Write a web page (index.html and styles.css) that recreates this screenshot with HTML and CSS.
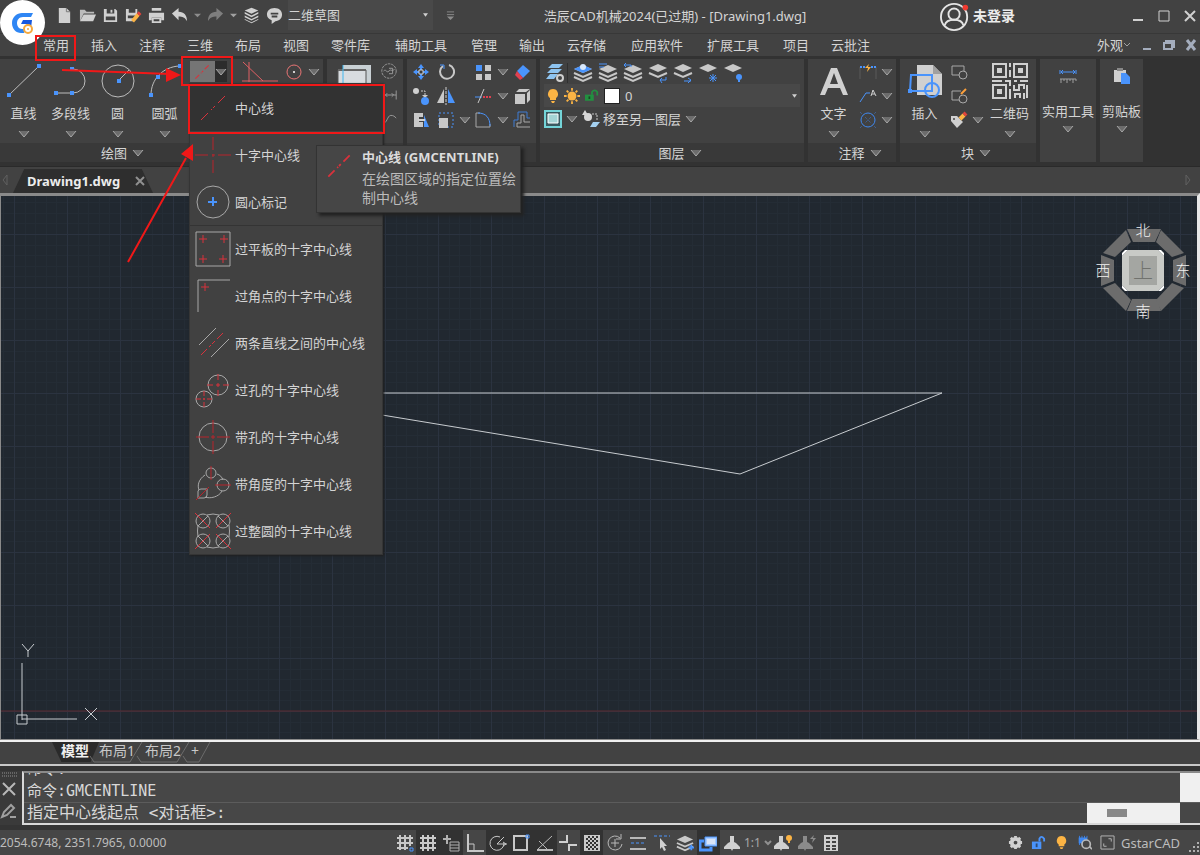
FILE: index.html
```html
<!DOCTYPE html>
<html lang="zh-CN">
  <head>
    <meta charset="utf-8">
    <title>浩辰CAD机械2024(已过期) - [Drawing1.dwg]</title>
    <link rel="stylesheet" href="styles.css">
  </head>
  <body>
    <svg class="defs" aria-hidden="true">
      <symbol id="caret" viewBox="0 0 12 8"><path d="M1 1h10L6 7z" fill="#6c6c6c"/><path d="M1 1l5 6 5-6" fill="none" stroke="#a8a8a8"/></symbol>
      <symbol id="stack" viewBox="0 0 20 20"><path d="M10 2l9 4-9 4-9-4z" fill="#c8c8c8"/><path d="M1 10l9 4 9-4M1 14l9 4 9-4" fill="none" stroke="#c8c8c8" stroke-width="2"/></symbol>
      <symbol id="centerline" viewBox="0 0 36 36"><path d="M6 30l7-7m3-3l1-1m1-1l2-2m3-3l7-7" fill="none" stroke="#d8323c"/></symbol>
      <symbol id="bulb" viewBox="0 0 12 16"><path d="M6 1a5 5 0 0 1 3 9v2H3v-2a5 5 0 0 1 3-9zM4 13h4l-1 2H5z" fill="#fcb444"/></symbol>
      <symbol id="lamp" viewBox="0 0 18 18"><path d="M7 2h4v6l2 1 4 4v2h-7l-1 2-1-2H1v-2l4-4 2-1z" fill="#d0d0d0"/></symbol>
    </svg>

    <header class="titlebar">
      <button class="logo" aria-label="浩辰CAD">
        <svg viewBox="0 0 45 45" width="45" height="45">
          <path d="M33 13H22c-5 0-10 4-10 10s4 10 9 10h3l2-4h-4c-3 0-5-3-5-6s2-6 6-6h8z" fill="#2f86f4"/>
          <path d="M32 20h-9l-2 4h6l-2 7 6-3z" fill="#1558e0"/>
          <circle cx="28" cy="29" r="4" fill="#fff" stroke="#f5a83c" stroke-width="2"/><circle cx="28" cy="29" r="1" fill="#f5a83c"/>
        </svg>
      </button>
      <div class="quick">
        <button aria-label="新建"><svg viewBox="0 0 18 18"><path d="M3 1h8l4 4v12H3z" fill="#d0d0d0"/><path d="M11 1v4h4" fill="none" stroke="#777"/></svg></button>
        <button aria-label="打开"><svg viewBox="0 0 18 18"><path d="M1 15V3h5l2 2h8v2H5z" fill="#bbb"/><path d="M5 8h13l-3 7H1z" fill="#d0d0d0"/></svg></button>
        <button aria-label="保存"><svg viewBox="0 0 18 18"><path d="M2 2h12l2 2v12H2z" fill="#d0d0d0"/><path d="M5 2h8v5H5zM4 10h10v4H4z" fill="#424242"/><path d="M9 3h2v3H9z" fill="#d0d0d0"/></svg></button>
        <button aria-label="另存为"><svg viewBox="0 0 18 18"><path d="M1 2h12v10l-4 3H1z" fill="#d0d0d0"/><path d="M4 2h7v4H4zM3 9h8v3H3z" fill="#424242"/><path d="M8 15l6-7" stroke="#fcb444" stroke-width="4"/><path d="M14 8l2-2" stroke="#e0443c" stroke-width="4"/></svg></button>
        <button aria-label="打印"><svg viewBox="0 0 18 18"><path d="M4 1h10v3H4zM1 6h16v8h-3v-3H4v3H1z" fill="#d0d0d0"/><path d="M5 12h8v4H5z" fill="none" stroke="#d0d0d0" stroke-width="2"/></svg></button>
        <button aria-label="撤销"><svg viewBox="0 0 18 18"><path d="M1 7l7-6v4c6 0 9 4 9 10-2-4-5-5-9-5v4z" fill="#d0d0d0"/></svg></button>
        <button class="thin" aria-label="撤销列表"><svg viewBox="0 0 8 8"><path d="M0 2h8L4 6z" fill="#8c8c8c"/></svg></button>
        <button aria-label="重做"><svg viewBox="0 0 18 18"><path d="M17 7l-7-6v4c-6 0-9 4-9 10 2-4 5-5 9-5v4z" fill="#7e7e7e"/></svg></button>
        <button class="thin" aria-label="重做列表"><svg viewBox="0 0 8 8"><path d="M0 2h8L4 6z" fill="#a0a0a0"/></svg></button>
        <button aria-label="图层"><svg viewBox="0 0 18 20"><path d="M9 1l8 3-8 4-8-4zM1 6l8 4 8-4v2l-8 4-8-4zM1 10l8 4 8-4v2l-8 4-8-4zM1 14l8 4 8-4v1l-8 4-8-4z" fill="#d0d0d0"/></svg></button>
        <button aria-label="消息"><svg viewBox="0 0 18 18"><path d="M9 1c5 0 8 3 8 7s-3 7-7 7l-4 3v-4c-3-1-5-3-5-6 0-4 3-7 8-7z" fill="#d0d0d0"/><path d="M5 7h8M6 10h6" stroke="#424242" stroke-width="2"/></svg></button>
      </div>
      <button class="workspace">二维草图<svg viewBox="0 0 6 4" width="5" height="4"><path d="M0 0h6L3 4z" fill="#d0d0d0"/></svg></button>
      <button class="more" aria-label="自定义"><svg viewBox="0 0 10 10" width="9" height="9"><path d="M1 1h8M1 4h8" stroke="#8c8c8c"/><path d="M1 6h8L5 10z" fill="#8c8c8c"/></svg></button>
      <div class="caption">浩辰CAD机械2024(已过期) - [Drawing1.dwg]</div>
      <div class="account">
        <button class="login">
          <svg viewBox="0 0 32 32" width="30" height="30" fill="none" stroke="#e4e4e4" stroke-width="2"><circle cx="15" cy="17" r="14"/><circle cx="15" cy="14" r="6"/><path d="M5 26c2-8 18-8 20 0"/><circle cx="27" cy="7" r="3" fill="#f03a30" stroke="none"/></svg>
          未登录
        </button>
        <div class="window-buttons">
          <button aria-label="最小化"><svg viewBox="0 0 12 12"><path d="M1 10h10" stroke="#d0d0d0" stroke-width="2"/></svg></button>
          <button aria-label="最大化"><svg viewBox="0 0 12 12"><path d="M1 1h10v10H1z" fill="none" stroke="#d0d0d0"/></svg></button>
          <button aria-label="关闭"><svg viewBox="0 0 12 12"><path d="M1 1l10 10M11 1L1 11" stroke="#d0d0d0" stroke-width="2"/></svg></button>
        </div>
      </div>
    </header>

    <nav class="menubar">
      <a class="active" href="#home">常用</a><a href="#insert">插入</a><a href="#annotate">注释</a><a href="#three">三维</a><a href="#layout">布局</a><a href="#view">视图</a><a class="w3" href="#parts">零件库</a><a class="w4" href="#assist">辅助工具</a><a href="#manage">管理</a><a href="#output">输出</a><a class="w3" href="#cloud">云存储</a><a class="w4" href="#apps">应用软件</a><a class="w4" href="#express">扩展工具</a><a href="#project">项目</a><a class="w3" href="#markup">云批注</a>
      <div class="doc-buttons">
        <button>外观<svg viewBox="0 0 8 6" width="8" height="6"><path d="M1 1l3 3 3-3" fill="none" stroke="#a0a0a0"/></svg></button>
        <button aria-label="最小化图形"><svg viewBox="0 0 12 12" width="12" height="12"><path d="M2 10h8" stroke="#a4adbd" stroke-width="2"/></svg></button>
        <button aria-label="还原图形"><svg viewBox="0 0 12 12" width="12" height="12"><path d="M3 4V2h8v6H9M1 4h8v6H1z" fill="none" stroke="#a4adbd" stroke-width="2"/></svg></button>
        <button aria-label="关闭图形"><svg viewBox="0 0 12 12" width="12" height="12"><path d="M2 1l8 10M10 1L2 11" stroke="#a4adbd" stroke-width="3"/></svg></button>
      </div>
    </nav>

    <section class="ribbon">
      <div class="panel draw">
        <div class="body">
          <button class="big"><svg viewBox="0 0 36 36"><path d="M3 32L33 3" stroke="#bdbdbd"/><path d="M1 30h4v4H1zM31 1h4v4h-4z" fill="#4a94fc"/></svg>直线<svg class="caret"><use href="#caret"/></svg></button>
          <button class="big"><svg viewBox="0 0 36 36"><path d="M3 30h17a12 12 0 0 0 0-24h-1" fill="none" stroke="#bdbdbd"/><path d="M1 28h4v4H1zM17 28h4v4h-4zM17 4h4v4h-4z" fill="#4a94fc"/></svg>多段线<svg class="caret"><use href="#caret"/></svg></button>
          <button class="big"><svg viewBox="0 0 36 36"><circle cx="18" cy="18" r="16" fill="none" stroke="#bdbdbd"/><path d="M18 18L29 7" stroke="#bdbdbd"/><path d="M17 16h4v4h-4z" fill="#4a94fc"/></svg>圆<svg class="caret"><use href="#caret"/></svg></button>
          <button class="big"><svg viewBox="0 0 36 36"><path d="M4 32C4 16 16 4 32 3" fill="none" stroke="#bdbdbd"/><path d="M2 30h4v4H2zM9 12h4v4H9zM31 1h4v4h-4z" fill="#4a94fc"/></svg>圆弧<svg class="caret"><use href="#caret"/></svg></button>
          <div class="split">
            <button class="main" aria-label="中心线"><svg viewBox="0 0 36 36" width="22" height="20"><use href="#centerline"/></svg></button>
            <button class="drop" aria-label="展开中心线"><svg class="caret"><use href="#caret"/></svg></button>
            <ul class="menu">
              <li class="current"><button><svg viewBox="0 0 36 36"><use href="#centerline"/></svg>中心线</button></li>
              <li><button><svg viewBox="0 0 36 36" stroke="#b8242c"><path d="M0 18h13m4 0h3m3 0h13M18 0v13m0 4v3m0 3v13"/></svg>十字中心线</button></li>
              <li><button><svg viewBox="0 0 36 36" fill="none"><circle cx="18" cy="18" r="16" stroke="#a8a8a8"/><path d="M13 18h9M18 13v9" stroke="#4a94fc" stroke-width="2"/></svg>圆心标记</button></li>
              <li class="rule"><button><svg viewBox="0 0 36 36" fill="none"><path d="M1 1h34v34H1z" stroke="#a8a8a8"/><path d="M4 8h8M8 4v8M25 8h8M29 4v8M4 28h8M8 24v8M24 28h8M28 24v8" stroke="#d8323c"/></svg>过平板的十字中心线</button></li>
              <li><button><svg viewBox="0 0 36 36" fill="none"><path d="M3 34V2h32" stroke="#a8a8a8"/><path d="M6 9h8M10 5v8" stroke="#d8323c"/></svg>过角点的十字中心线</button></li>
              <li><button><svg viewBox="0 0 36 36" fill="none"><path d="M4 20L21 3M16 32l18-18" stroke="#a8a8a8"/><path d="M6 30l6-6m2-2l2-2m1-1l3-3m2-2l6-6" stroke="#d8323c"/></svg>两条直线之间的中心线</button></li>
              <li><button><svg viewBox="0 0 36 36" fill="none"><circle cx="23" cy="13" r="10" stroke="#a8a8a8"/><circle cx="9" cy="27" r="8" stroke="#a8a8a8"/><path d="M12 13h6m3 0h4m3 0h6M23 2v6m0 3v4m0 3v6M1 27h5m2 0h2m2 0h5M9 19v5m0 2v2m0 2v5" stroke="#d8323c"/></svg>过孔的十字中心线</button></li>
              <li><button><svg viewBox="0 0 36 36" fill="none"><circle cx="18" cy="18" r="14" stroke="#a8a8a8"/><path d="M1 18h13m2 0h4m2 0h13M18 1v13m0 2v4m0 2v13" stroke="#b8242c"/></svg>带孔的十字中心线</button></li>
              <li><button><svg viewBox="0 0 36 36" fill="none" stroke="#a8a8a8"><path d="M10 9c-6 4-8 10-6 15M22 8c3 1 5 3 6 6M27 25c-3 6-12 8-17 6"/><circle cx="16" cy="7" r="5"/><circle cx="28" cy="19" r="6"/><path d="M3 32v-7q1-2 3-2h6v6q0 3-3 3z"/><path d="M16 0v14M20 19h16M1 34l13-13" stroke="#b8242c"/></svg>带角度的十字中心线</button></li>
              <li><button><svg viewBox="0 0 36 36" fill="none" stroke="#a8a8a8"><circle cx="8" cy="8" r="7"/><circle cx="28" cy="8" r="7"/><circle cx="8" cy="28" r="7"/><circle cx="28" cy="28" r="7"/><path d="M12 2q6-2 12 0M12 34q6 2 12 0M3 12q-1 6 0 12M34 12q1 6 0 12M3 13L13 3M23 3l10 10M3 23l10 10M23 33l10-10"/><path d="M0 0l15 15M36 0L21 15M0 36l15-15M36 36L21 21" stroke="#d8323c"/></svg>过整圆的十字中心线</button></li>
            </ul>
            <div class="tooltip" role="tooltip">
              <svg viewBox="0 0 36 36" width="32" height="32"><use href="#centerline"/></svg>
              <div><strong>中心线 (GMCENTLINE)</strong><p>在绘图区域的指定位置绘制中心线</p></div>
            </div>
          </div>
          <button class="small wide" aria-label="角度中心线"><svg viewBox="0 0 38 22" width="38" height="22"><path d="M2 1l20 19M8 1v20M1 20h36" fill="none" stroke="#e06064"/></svg></button>
          <button class="small" aria-label="中心圆"><svg viewBox="0 0 18 18"><circle cx="9" cy="9" r="7" fill="none" stroke="#e87474"/><circle cx="9" cy="9" r="1" fill="#fff"/></svg></button>
          <button class="small slim" aria-label="展开"><svg class="caret"><use href="#caret"/></svg></button>
        </div>
        <div class="foot">绘图<svg class="caret"><use href="#caret"/></svg></div>
      </div>

      <div class="panel detail">
        <div class="body">
          <button class="big" aria-label="局部视图"><svg viewBox="0 0 36 36"><path d="M7 2h28v22H7z" fill="#c8d0d4"/><path d="M2 7h28v26H2z" fill="#d8dce0" stroke="#555"/><path d="M2 7h28" stroke="#666" stroke-width="2"/><path d="M7 2v31" stroke="#40b8f0"/></svg></button>
          <div class="column">
            <button class="small" aria-label="云线"><svg viewBox="0 0 20 20" fill="none" stroke="#a0a0a0"><circle cx="10" cy="10" r="8" stroke-dasharray="3 1"/><path d="M4 10c3-3 3 3 6 0s3 2 6-2M10 7h4v6h-4"/></svg></button>
            <button class="small" aria-label="标注"><svg viewBox="0 0 20 20" fill="none" stroke="#a0a0a0"><path d="M2 3v14M18 5v10M2 10h16M8 8l-2 2 2 2M13 8l2 2-2 2"/></svg></button>
            <button class="small" aria-label="样条"><svg viewBox="0 0 20 20" fill="none" stroke="#a0a0a0"><path d="M2 15c6 1 6-9 10-9 3 0 4 1 6 3"/></svg></button>
          </div>
        </div>
        <div class="foot"></div>
      </div>

      <div class="panel modify">
        <div class="body tools">
          <button class="small" aria-label="移动"><svg viewBox="0 0 18 18"><path d="M9 1l3 4H6zM9 17l3-4H6zM1 9l4-3v6zM17 9l-4-3v6z" fill="#4a94fc"/><path d="M9 3v4M9 11v4M3 9h4M11 9h4" stroke="#4a94fc" stroke-width="2"/><path d="M7 7h4v4H7z" fill="#3a3a3a" stroke="#d0d0d0"/></svg></button>
          <button class="small" aria-label="旋转"><svg viewBox="0 0 18 18" fill="none"><path d="M6 3a7 7 0 1 0 6-1" stroke="#c8c8c8" stroke-width="2"/><path d="M3 2h4v4" stroke="#4a94fc"/></svg></button>
          <span></span>
          <button class="small" aria-label="阵列"><svg viewBox="0 0 18 18"><path d="M2 2h6v6H2z" fill="#4a94fc"/><path d="M11 2h6v6h-6zM2 11h6v6H2zM11 11h6v6h-6z" fill="#c8c8c8"/></svg></button>
          <button class="small" aria-label="阵列列表"><svg class="caret"><use href="#caret"/></svg></button>
          <button class="small" aria-label="删除"><svg viewBox="0 0 18 18"><path d="M10 2l7 6-7 7-6-7z" fill="#4a94fc"/><path d="M4 8l6 7-3 2-5-5z" fill="#e04050"/></svg></button>

          <button class="small" aria-label="复制"><svg viewBox="0 0 18 18"><circle cx="4" cy="4" r="3" fill="#d0d0d0"/><path d="M9 4h4v5" fill="none" stroke="#c8c8c8" stroke-dasharray="2 1"/><path d="M10 8h6l-3 3z" fill="#c8c8c8"/><circle cx="13" cy="14" r="4" fill="#4a94fc"/></svg></button>
          <button class="small" aria-label="镜像"><svg viewBox="0 0 18 18"><path d="M7 2v14H0z" fill="#c8c8c8"/><path d="M11 2v14h7z" fill="#4a94fc"/><path d="M9 0v18" stroke="#d0d0d0" stroke-dasharray="3 1"/></svg></button>
          <span></span>
          <button class="small" aria-label="修剪"><svg viewBox="0 0 18 18"><path d="M1 10h7" stroke="#4a94fc"/><path d="M4 16L10 2" stroke="#c8c8c8"/><path d="M9 10h9" stroke="#e04050" stroke-width="2" stroke-dasharray="2 1"/></svg></button>
          <button class="small" aria-label="修剪列表"><svg class="caret"><use href="#caret"/></svg></button>
          <button class="small" aria-label="实体"><svg viewBox="0 0 18 18"><path d="M2 7h10v10H2zM3 5l3-3h11l-4 3zM14 6l3-3v10l-3 3z" fill="#c8c8c8"/></svg></button>

          <button class="small" aria-label="拉伸"><svg viewBox="0 0 18 18"><path d="M2 2h9v4H7v5h4v5H2z" fill="#c8c8c8"/><path d="M12 4l5 12h-5z" fill="#4a94fc"/><path d="M6 9h7" stroke="#d0d0d0" stroke-width="2"/></svg></button>
          <button class="small" aria-label="缩放"><svg viewBox="0 0 18 18"><path d="M2 2h14v14H2z" fill="none" stroke="#4a94fc" stroke-dasharray="2 2"/><path d="M2 7h9v10H2z" fill="#c8c8c8"/></svg></button>
          <button class="small" aria-label="缩放列表"><svg class="caret"><use href="#caret"/></svg></button>
          <button class="small" aria-label="圆角"><svg viewBox="0 0 18 18" fill="none"><path d="M6 2H2v14h14v-3" stroke="#a8a8a8"/><path d="M4 2c8 0 12 5 12 13" stroke="#4a94fc"/></svg></button>
          <button class="small" aria-label="圆角列表"><svg class="caret"><use href="#caret"/></svg></button>
          <button class="small" aria-label="偏移"><svg viewBox="0 0 18 18" fill="none"><path d="M17 7h-3V1H5v8H1v7" stroke="#3f7cd4"/><path d="M17 11h-6V4H8v8H4v4h13" stroke="#a8a8a8"/></svg></button>
        </div>
        <div class="foot"></div>
      </div>

      <div class="panel layers">
        <div class="body rows">
          <div class="row layer-tools">
            <button aria-label="图层特性"><svg viewBox="0 0 20 20"><path d="M7 1h11l-4 4H3zM6 6h11l-4 4H2zM5 11h8l-4 5H1z" fill="#8ec4f0"/><circle cx="15" cy="15" r="3" fill="#444" stroke="#d0d0d0" stroke-width="2"/></svg></button>
            <button aria-label="设为当前"><svg viewBox="0 0 20 20"><use href="#stack"/><path d="M10 2l9 4-9 4-9-4z" fill="#4a94fc"/><circle cx="10" cy="4" r="3" fill="#d8e8fc"/></svg></button>
            <button aria-label="匹配图层"><svg viewBox="0 0 20 20"><use href="#stack"/><path d="M1 1h8M1 4h5" stroke="#4a94fc"/></svg></button>
            <button aria-label="上一个图层"><svg viewBox="0 0 20 20"><use href="#stack"/><path d="M1 2h7v2M3 0L1 2l2 2" fill="none" stroke="#4a94fc"/></svg></button>
            <button aria-label="图层隔离"><svg viewBox="0 0 20 20"><path d="M10 1l9 4-9 4-9-4z" fill="#c8c8c8"/><path d="M1 10l9 4 9-4" fill="none" stroke="#c8c8c8" stroke-width="2"/><path d="M18 14v3h-6m2-2l-2 2 2 3" fill="none" stroke="#4a94fc"/></svg></button>
            <button aria-label="取消隔离"><svg viewBox="0 0 20 20"><path d="M10 1l9 4-9 4-9-4z" fill="#c8c8c8"/><path d="M1 10l9 4 9-4" fill="none" stroke="#c8c8c8" stroke-width="2"/><path d="M11 18h7m-3-3l3 2-3 3" fill="none" stroke="#4a94fc"/></svg></button>
            <button aria-label="冻结图层"><svg viewBox="0 0 20 20"><path d="M10 1l9 4-9 4-9-4z" fill="#c8c8c8"/><path d="M15 11v8M11 15h8M12 12l6 6M18 12l-6 6" stroke="#4a94fc"/></svg></button>
            <button aria-label="关闭图层"><svg viewBox="0 0 20 20"><path d="M10 1l9 4-9 4-9-4z" fill="#c8c8c8"/><circle cx="16" cy="14" r="3" fill="#4a94fc"/><path d="M16 15v4" stroke="#4a94fc" stroke-width="2"/></svg></button>
          </div>
          <button class="layer-combo">
            <svg width="12" height="16"><use href="#bulb"/></svg>
            <svg viewBox="0 0 18 18" width="16" height="16"><circle cx="9" cy="9" r="5" fill="#fcb444"/><path d="M9 0v3M9 15v3M0 9h3M15 9h3M3 3l2 2M13 13l2 2M15 3l-2 2M5 13l-2 2" stroke="#fcb444" stroke-width="2"/></svg>
            <svg viewBox="0 0 16 14" width="14" height="13"><path d="M0 6h10v7H0z" fill="#229040"/><path d="M8 6V3q3-4 6 0v4" fill="none" stroke="#229040" stroke-width="2"/><path d="M4 8h2v3H4z" fill="#1b4a25"/></svg>
            <i class="swatch"></i><span>0</span>
            <svg class="end" viewBox="0 0 6 4" width="5" height="4"><path d="M0 0h6L3 4z" fill="#d0d0d0"/></svg>
          </button>
          <div class="row layer-move">
            <button aria-label="图层状态"><svg viewBox="0 0 18 18" width="18" height="18"><path d="M1 1h16v16H1z" fill="#3a5a60" stroke="#74d4d8" stroke-width="2"/><path d="M4 4h10v9H4z" fill="#a4d4d4" stroke="#fff"/></svg></button>
            <svg class="caret"><use href="#caret"/></svg>
            <button class="move"><svg viewBox="0 0 18 18" width="18" height="18"><path d="M3 0l3 5H0z" fill="#d8d8d8"/><circle cx="6" cy="7" r="4" fill="#d8d8d8"/><path d="M10 4h5v6" fill="none" stroke="#c8c8c8" stroke-dasharray="2 1"/><path d="M11 12h7l-4 5H8z" fill="#a4d0f0"/></svg>移至另一图层</button>
            <svg class="caret"><use href="#caret"/></svg>
          </div>
        </div>
        <div class="foot">图层<svg class="caret"><use href="#caret"/></svg></div>
      </div>

      <div class="panel annotate">
        <div class="body">
          <button class="big"><svg viewBox="0 0 36 36"><path d="M15 5h6l11 27h-5l-3-7H12l-3 7H4zM18 10l-4 11h8z" fill="#d0d0d0"/></svg>文字<svg class="caret"><use href="#caret"/></svg></button>
          <div class="pairs">
            <button class="small" aria-label="快速标注"><svg viewBox="0 0 18 18"><path d="M1 4v12M17 4v12" stroke="#5a5a5a"/><path d="M1 4h5M12 4h5" stroke="#4a94fc" stroke-dasharray="2 1" stroke-width="2"/><path d="M10 1L6 5h3L8 9l4-5H9z" fill="#fcb444"/></svg></button><svg class="caret"><use href="#caret"/></svg>
            <button class="small" aria-label="引线"><svg viewBox="0 0 18 18"><path d="M1 15L7 6h4" fill="none" stroke="#4a94fc"/><path d="M12 9l2-6 3 6M13 7h3" fill="none" stroke="#d0d0d0"/></svg></button><svg class="caret"><use href="#caret"/></svg>
            <button class="small" aria-label="中心标注"><svg viewBox="0 0 18 18"><circle cx="9" cy="9" r="7" fill="none" stroke="#3f88f0" stroke-width="1"/><path d="M6 6l6 6M12 6l-6 6M1 1l2 2M17 1l-2 2M1 17l2-2M17 17l-2-2" stroke="#3f6cb0" stroke-dasharray="1 1"/></svg></button><svg class="caret"><use href="#caret"/></svg>
          </div>
        </div>
        <div class="foot">注释<svg class="caret"><use href="#caret"/></svg></div>
      </div>

      <div class="panel block">
        <div class="body">
          <button class="big"><svg viewBox="0 0 36 36"><path d="M10 2h16l9 9v21H10z" fill="#d0d0d0"/><path d="M26 2v9h9z" fill="#a0a0a0"/><g fill="none" stroke="#4a94fc" stroke-width="2"><path d="M4 12h21v16H3z"/><circle cx="25" cy="27" r="7"/></g><path d="M1 26h4v4H1z" fill="#4a94fc"/></svg>插入<svg class="caret"><use href="#caret"/></svg></button>
          <div class="pairs">
            <button class="small" aria-label="创建块"><svg viewBox="0 0 18 18" fill="none" stroke="#a8a8a8"><path d="M9 12H2V3h12v5"/><circle cx="13" cy="12" r="4"/></svg></button><span></span>
            <button class="small" aria-label="编辑块"><svg viewBox="0 0 18 18" fill="none" stroke="#a8a8a8"><path d="M9 13H2V4h9"/><circle cx="13" cy="12" r="4"/><path d="M11 7l5-5" stroke="#fca03c" stroke-width="2"/></svg></button><span></span>
            <button class="small" aria-label="块属性"><svg viewBox="0 0 18 18"><path d="M1 5h6l6 6-6 6-6-7z" fill="#d0d0d0"/><circle cx="4" cy="8" r="1" fill="#444"/><path d="M10 8l4-4" stroke="#fcb444" stroke-width="4"/><path d="M14 4l2-2" stroke="#e0443c" stroke-width="4"/></svg></button><svg class="caret"><use href="#caret"/></svg>
          </div>
          <button class="big"><svg viewBox="0 0 36 36"><g fill="none" stroke="#d0d0d0" stroke-width="2"><path d="M1 1h13v13H1zM22 1h13v13H22zM1 22h13v13H1z"/><path d="M18 0v4m0 3v7M0 18h10m3 0h5v5m0 3v10M22 18h3m3 0h8M22 22v5h5v-5h5v4m3-4v13M23 35v-4h5v4m4-5v6"/></g><path d="M5 5h5v5H5zM26 5h5v5h-5zM5 26h5v5H5z" fill="#d0d0d0"/></svg>二维码<svg class="caret"><use href="#caret"/></svg></button>
        </div>
        <div class="foot">块<svg class="caret"><use href="#caret"/></svg></div>
      </div>

      <div class="panel single utils">
        <button><svg viewBox="0 0 18 18"><path d="M1 3v4M17 3v4M2 5h14M4 3L2 5l2 2M14 3l2 2-2 2" fill="none" stroke="#4a94fc"/><path d="M1 12h16M2 12v4M5 12v2M8 12v4M11 12v2M14 12v4M17 12v2" stroke="#a0a0a0"/></svg>实用工具<svg class="caret"><use href="#caret"/></svg></button>
      </div>
      <div class="panel single clip">
        <button><svg viewBox="0 0 18 18"><path d="M1 3h12v12H1z" fill="#d0d0d0"/><path d="M4 1h6v3H4z" fill="#888"/><path d="M8 6h5l4 4v7H8z" fill="#4a94fc"/></svg>剪贴板<svg class="caret"><use href="#caret"/></svg></button>
      </div>
    </section>

    <div class="doc-tabs">
      <svg class="edge" viewBox="0 0 6 12" width="6" height="12"><path d="M5 1v10L1 6z" fill="none" stroke="#606060"/></svg>
      <div class="doc-tab">Drawing1.dwg<button aria-label="关闭标签"><svg viewBox="0 0 10 10" width="10" height="10"><path d="M1 1l8 8M9 1L1 9" stroke="#909090" stroke-width="2"/></svg></button></div>
      <svg class="edge" viewBox="0 0 6 12" width="6" height="12"><path d="M1 1v10l4-5z" fill="none" stroke="#606060"/></svg>
    </div>

    <main class="canvas">
      <svg class="drawing" fill="none" stroke="#c8ccd0">
        <path d="M0 515h1196" stroke="#5c2a30"/>
        <path d="M381 197h560l-202 81-358-59"/>
        <path d="M21 467v57M21 523h55" stroke-width="1"/>
        <path d="M16 519h10v9H16zM21 448l6 7 6-7M27 455v6M84 512l12 12M96 512l-12 12"/>
      </svg>
      <svg class="compass" viewBox="0 0 108 108" width="108" height="108">
        <g fill="#6c6c6c">
          <path d="M37 11h34l-6 13H43zM42 81h25l4 12H37z"/>
          <path id="side" d="M36 12l5 12-16 15-12-4zM11 37l13 5v21l-13 5zM13 70l12-5 16 17-5 11z"/>
          <use href="#side" transform="translate(107 0) scale(-1 1)"/>
        </g>
        <path d="M38 32h30l6 6v29l-6 6H38l-6-6V38z" fill="#c8cac6"/>
        <path d="M39 38h28v29H39z" fill="#a4a6a2"/>
        <path d="M38 32l-6 6v-3l3-3zM68 32l6 6v-3l-3-3zM38 73l-6-6v3l3 3zM68 73l6-6v3l-3 3z" fill="#fff"/>
        <g class="bearings"><text x="53" y="18">北</text><text x="53" y="99">南</text><text x="13" y="58">西</text><text x="93" y="58">东</text><text class="up" x="53" y="60">上</text></g>
      </svg>
    </main>

    <nav class="layouts">
      <a class="model" href="#model">模型</a><a href="#layout1">布局1</a><a href="#layout2">布局2</a><a class="add" href="#add">+</a>
      <svg class="edges" viewBox="0 0 170 22" width="170" height="22" fill="none" stroke="#6c6c6c"><path d="M43 14l4 6h36l12-20M90 14l4 6h36l12-20M136 14l4 6h12l11-20"/></svg>
    </nav>

    <section class="command">
      <div class="grip">
        <svg viewBox="0 0 18 54" width="18" height="54"><path d="M2 2h15M2 5h15" stroke="#909090" stroke-dasharray="1 1"/><path d="M3 12l12 12M15 12L3 24" stroke="#b8b8b8" stroke-width="2"/><path d="M2 46l2-5 7-7 3 3-7 7zM10 46h6" fill="none" stroke="#a0a0a0" stroke-width="2"/></svg>
      </div>
      <div class="console">
        <div class="history">
          <div class="lines"><p>命令:</p><p>命令:GMCENTLINE</p></div>
          <div class="vscroll"></div>
        </div>
        <div class="entry">
          <label for="cmd">指定中心线起点 &lt;对话框&gt;:</label>
          <input id="cmd" type="text">
          <div class="hscroll"><i></i></div>
        </div>
      </div>
    </section>

    <footer class="status">
      <span class="coords">2054.6748, 2351.7965, 0.0000</span>
      <div class="toggles">
        <button aria-label="捕捉"><svg viewBox="0 0 18 18" fill="none" stroke="#c8c8c8" stroke-width="2"><path d="M4 1v15M9 1v15M14 1v11M1 4h16M1 9h16M1 14h11"/><path d="M14 14h3v3h-3z" stroke="#4a94fc" stroke-width="1"/></svg></button>
        <button class="on" aria-label="栅格"><svg viewBox="0 0 18 18" stroke="#c8c8c8" stroke-width="2"><path d="M4 1v16M9 1v16M14 1v16M1 4h16M1 9h16M1 14h16"/></svg></button>
        <button class="on" aria-label="动态输入"><svg viewBox="0 0 18 18" fill="none" stroke="#b0b0b0"><path d="M5 1v9M1 5h8" stroke-width="2"/><path d="M8 8h9v9H8zM8 11h9M8 14h9"/></svg></button>
        <button aria-label="正交"><svg viewBox="0 0 18 18" fill="none" stroke="#c8c8c8"><path d="M2 0v17h16" stroke-width="2"/><path d="M3 10h5v6"/></svg></button>
        <button class="on" aria-label="极轴"><svg viewBox="0 0 18 18" fill="none" stroke="#c8c8c8"><path d="M15 9a7 7 0 1 1-4-6M8 10l7-7M8 10h10M14 8l3 2-3 2"/></svg></button>
        <button class="on" aria-label="对象捕捉"><svg viewBox="0 0 18 18" fill="none" stroke="#c8c8c8" stroke-width="2"><path d="M2 2h13v14H2z"/><path d="M14 1h3v3h-3z" stroke="#4a94fc" stroke-width="1"/></svg></button>
        <button class="on" aria-label="对象追踪"><svg viewBox="0 0 18 18" fill="none" stroke="#b8b8b8"><path d="M1 16h16" stroke-width="2"/><path d="M2 15L16 2M3 7l8 8"/></svg></button>
        <button aria-label="线宽"><svg viewBox="0 0 18 18" fill="none" stroke="#d0d0d0" stroke-width="2"><path d="M0 8h8V1M10 17v-6h8"/></svg></button>
        <button class="on" aria-label="透明度"><svg viewBox="0 0 18 18"><path d="M1 1h16v16H1z" fill="#c8c8c8"/><path d="M3 5h12M3 9h12M3 13h12" stroke="#333" stroke-width="2" stroke-dasharray="2 2"/><path d="M5 3h10M5 7h10M5 11h10M5 15h10" stroke="#333" stroke-width="2" stroke-dasharray="2 2"/></svg></button>
        <button aria-label="循环选择"><svg viewBox="0 0 18 18" fill="none" stroke="#b8b8b8"><path d="M14 4a7 7 0 1 0 2 6M15 0v5h-5M9 5v8M5 9h8"/></svg></button>
        <button aria-label="线型"><svg viewBox="0 0 18 18"><path d="M1 4h16M1 15h16" stroke="#b8b8b8" stroke-width="2"/><path d="M2 9h14" stroke="#4a94fc" stroke-dasharray="3 2"/></svg></button>
        <button aria-label="选择"><svg viewBox="0 0 18 18"><path d="M1 2h16" stroke="#4a94fc" stroke-dasharray="3 2"/><path d="M7 4l7 8h-3l2 4-2 1-2-4-2 2z" fill="#d0d0d0"/></svg></button>
        <button aria-label="图层预览"><svg viewBox="0 0 20 20"><use href="#stack"/><path d="M17 12v6M14 15h6" stroke="#4a94fc" stroke-width="2"/></svg></button>
        <button class="on" aria-label="注释监视"><svg viewBox="0 0 18 18"><path d="M6 3h12v9H6z" fill="#a8ccff" stroke="#4a94fc"/><path d="M8 5h8v5H8z" fill="#d8e4f8"/><path d="M5 7H1v9h11v-3" fill="none" stroke="#4a94fc" stroke-width="3"/></svg></button>
      </div>
      <button class="scale"><svg viewBox="0 0 18 18" width="18" height="18"><use href="#lamp"/></svg>1:1<svg viewBox="0 0 8 6" width="8" height="6"><path d="M1 1l3 3 3-3" fill="none" stroke="#909090" stroke-width="2"/></svg></button>
      <button class="tail" aria-label="注释可见性"><svg viewBox="0 0 18 18"><use href="#lamp" x="-2"/><circle cx="15" cy="4" r="3" fill="#fcb444"/><path d="M15 5v4" stroke="#fcb444" stroke-width="2"/></svg></button>
      <button class="tail dim" aria-label="自动缩放"><svg viewBox="0 0 18 18"><use href="#lamp" x="-2"/><path d="M16 1l-4 4h3l-1 4 4-5h-3z" fill="#d0d0d0"/></svg></button>
      <button class="tail" aria-label="快捷特性"><svg viewBox="0 0 18 18"><path d="M2 1h14v16H2z" fill="#d0d0d0"/><path d="M4 4h4M10 4h4M4 8h4M10 8h4M4 12h4M10 12h4M4 15h4M10 15h4" stroke="#444" stroke-width="2"/></svg></button>
      <div class="system">
        <button aria-label="设置"><svg viewBox="0 0 16 16"><circle cx="8" cy="8" r="4" fill="none" stroke="#d0d0d0" stroke-width="4"/><path d="M8 1v2M8 13v2M1 8h2M13 8h2M3 3l2 2M11 11l2 2M13 3l-2 2M5 11l-2 2" stroke="#d0d0d0" stroke-width="3"/></svg></button>
        <button aria-label="锁定"><svg viewBox="0 0 16 16"><path d="M1 7h10v8H1z" fill="#4a94fc"/><path d="M9 7V4q2-4 5 0v3" fill="none" stroke="#4a94fc" stroke-width="2"/><path d="M5 9h2v4H5z" fill="#2c4c78"/></svg></button>
        <button aria-label="提示"><svg width="12" height="16"><use href="#bulb"/></svg></button>
        <button aria-label="硬件加速"><svg viewBox="0 0 18 18"><path d="M2 3h10v7H2z" fill="#3f88f0"/><path d="M3 1v11M6 1v11M9 1v11M12 1v6" stroke="#3f88f0"/><circle cx="11" cy="11" r="5" fill="#464646" stroke="#b8b8b8" stroke-width="2"/><path d="M15 14l3 3" stroke="#b8b8b8" stroke-width="2"/></svg></button>
        <button aria-label="全屏"><svg viewBox="0 0 16 16" fill="none" stroke="#b8b8b8"><path d="M1 1h14v14H1z"/><path d="M9 4h3v3M4 9v3h3"/></svg></button>
        <span>GstarCAD</span>
        <svg class="resize" viewBox="0 0 10 10" width="10" height="10"><path d="M8 0h2v2H8zM4 4h2v2H4zM8 4h2v2H8zM0 8h2v2H0zM4 8h2v2H4zM8 8h2v2H8z" fill="#b0b0b0"/></svg>
      </div>
    </footer>

    <!-- tutorial callouts -->
    <svg class="callouts" width="400" height="270" fill="none" stroke="#f01818" stroke-width="2" aria-hidden="true">
      <path d="M36 36h39v24H36zM182 57h50v28h-50z"/>
      <path d="M189 85h195v48H189z"/>
      <path d="M62 70l108 4M128 262l58-104"/>
      <path d="M166 68l15 7-15 7zM193 144l-12 10 12 7z" fill="#f01818" stroke="none"/>
    </svg>
  </body>
</html>
```
FILE: styles.css
```css
* { box-sizing: border-box; }
body { margin: 0; min-height: 100vh; display: flex; flex-direction: column; position: relative; overflow-x: hidden; background: #424242; color: #d4d4d4; font: 13px/18px "Noto Sans", "Noto Sans CJK SC", sans-serif; }
button { margin: 0; padding: 0; border: 0; background: none; color: inherit; font: inherit; white-space: nowrap; }
a { color: inherit; text-decoration: none; white-space: nowrap; }
svg { display: block; flex: none; }
p { margin: 0; }
.defs { position: absolute; width: 0; height: 0; }
.caret { width: 12px; height: 8px; }

/* title bar */
.titlebar { display: flex; height: 34px; border-bottom: 1px solid #383838; }
.logo { position: absolute; left: 0; top: 0; width: 45px; height: 45px; border-radius: 50%; background: #fff; z-index: 2; }
.quick { display: flex; align-items: center; height: 30px; padding: 0 2px 0 53px; }
.quick button { width: 23px; display: flex; justify-content: center; }
.quick button.thin { width: 13px; }
.quick svg { width: 17px; height: 17px; }
.quick .thin svg { width: 7px; height: 7px; }
.workspace { display: flex; align-items: center; justify-content: space-between; width: 145px; height: 30px; padding-right: 5px; background: #494949; }
.more { display: flex; align-items: center; justify-content: center; width: 34px; height: 30px; }
.caption { flex: 1; text-align: center; line-height: 32px; white-space: nowrap; }
.account { display: flex; justify-content: space-between; width: 317px; padding-left: 57px; }
.login { display: flex; align-items: center; gap: 3px; height: 32px; font-weight: bold; font-size: 14px; color: #ececec; }
.window-buttons { display: flex; align-items: center; gap: 14px; height: 32px; padding-right: 4px; }
.window-buttons svg { width: 12px; height: 12px; }

/* menu bar */
.menubar { display: flex; height: 22px; line-height: 23px; padding-left: 43px; }
.menubar a { width: 48px; }
.menubar .w3 { width: 64px; }
.menubar .w4 { width: 76px; }
.doc-buttons { display: flex; align-items: center; gap: 10px; margin-left: auto; padding-right: 3px; }
.doc-buttons button { display: flex; align-items: center; }

/* ribbon */
.ribbon { display: flex; gap: 4px; height: 111px; padding: 3px 0 4px; background: #323232; border-bottom: 1px solid #2a2a2a; }
.panel { display: flex; flex-direction: column; background: #414141; }
.body { display: flex; flex: 1; }
.foot { display: flex; align-items: center; justify-content: center; gap: 5px; height: 19px; padding-left: 16px; background: #393939; }
.big { display: flex; flex-direction: column; align-items: center; align-self: flex-start; width: 47px; padding-top: 4px; }
.big svg:first-child { width: 36px; height: 36px; margin-bottom: 5px; }
.big .caret { margin-top: 8px; }
.small { display: flex; align-items: center; justify-content: center; width: 24px; height: 24px; }
.small svg { width: 18px; height: 18px; }
.small svg.caret { width: 12px; height: 8px; }
.draw { width: 323px; }
.draw .foot { justify-content: flex-start; padding-left: 101px; }
.draw .small { margin-top: 1px; }
.draw .wide { width: 44px; }
.draw .wide svg { width: 38px; height: 22px; }
.draw .slim { width: 16px; }
.split { position: relative; display: flex; width: 50px; height: 22px; margin-top: 2px; padding-left: 2px; }
.split .main { width: 25px; height: 21px; padding-left: 1px; background: #757575; }
.split .main svg { stroke-width: 2; }
.split .drop { display: flex; align-items: center; justify-content: center; width: 12px; height: 21px; background: #2c2c2c; }
.detail { width: 76px; }
.detail .body { padding-left: 3px; }
.modify { width: 129px; }
.tools { display: grid; grid-template-columns: 24px 26px 12px 23px 17px 22px; grid-auto-rows: 24px; padding: 1px 0 0 2px; align-content: start; }
.tools .small { width: auto; }
.layers { width: 264px; }
.rows { flex-direction: column; padding: 2px 4px 0; }
.row { display: flex; align-items: center; height: 23px; }
.layer-tools { gap: 5px; padding-left: 1px; }
.layer-tools svg { width: 20px; height: 20px; }
.layer-tools button:first-child { padding-right: 2px; border-right: 1px solid #303030; }
.layer-combo { display: flex; align-items: center; gap: 5px; height: 23px; padding: 0 3px; background: #484848; }
.swatch { width: 16px; height: 16px; background: #fff; border: 1px solid #222; }
.end { margin-left: auto; }
.layer-move { gap: 4px; height: 24px; }
.move { display: flex; align-items: center; gap: 3px; }
.annotate { width: 88px; }
.annotate .body { padding-left: 2px; }
.pairs { display: grid; grid-template-columns: 22px 16px; grid-auto-rows: 24px; align-items: center; justify-items: center; align-content: start; padding-top: 1px; }
.block { width: 136px; }
.block .body { padding-left: 1px; }
.block .big:last-child { width: 43px; margin-left: 2px; }
.single button { display: flex; flex-direction: column; align-items: center; padding-top: 8px; }
.single button svg:first-child { width: 18px; height: 18px; margin-bottom: 17px; }
.single .caret { margin-top: 5px; }
.utils { width: 56px; }
.clip { width: 43px; }

/* centre line drop-down */
.menu { position: absolute; left: 1px; top: 22px; z-index: 3; width: 194px; margin: 0; padding: 0; list-style: none; background: #414141; border: 1px solid #353535; box-shadow: 1px 1px 2px #202020; }
.menu button { display: flex; align-items: center; gap: 4px; width: 100%; height: 47px; padding-left: 5px; }
.menu .rule button { height: 46px; }
.menu svg { width: 36px; height: 36px; }
.menu .current { background: #323232; }
.menu .rule { border-top: 1px solid #343434; }
.tooltip { position: absolute; left: 128px; top: 84px; z-index: 4; display: flex; gap: 7px; width: 205px; padding: 2px 3px 5px 6px; background: #464646; border: 1px solid #333; box-shadow: 3px 3px 3px #222; color: #bcbcbc; }
.tooltip > svg { margin-top: 2px; stroke-width: 2; }
.tooltip strong { color: #dcdcdc; white-space: nowrap; }
.tooltip p { font-size: 14px; line-height: 19px; margin-top: 3px; }

/* document tabs */
.doc-tabs { display: flex; align-items: center; justify-content: space-between; height: 26px; padding: 0 9px 0 2px; }
.doc-tab { display: flex; align-items: center; gap: 15px; height: 24px; margin: 2px auto 0 5px; padding: 0 8px 0 14px; width: 140px; background: #2e2e2e; clip-path: polygon(8% 0, 92% 0, 100% 100%, 0 100%); color: #ececec; font-weight: bold; }

/* drawing area */
.canvas {
  position: relative; flex: 1; border: solid #8a8a8a; border-width: 3px 3px 1px 1px; border-right-color: #e8e8e8;
  background-color: #212830;
  background-image:
    linear-gradient(90deg, #2b3340 1px, transparent 1px),
    linear-gradient(#2b3340 1px, transparent 1px),
    linear-gradient(90deg, transparent 11px, #242c35 11px 12px, transparent 12px 21px, #242c35 21px 22px, transparent 22px 32px, #242c35 32px 33px, transparent 33px 42px, #242c35 42px 43px, transparent 43px),
    linear-gradient(transparent 11px, #242c35 11px 12px, transparent 12px 21px, #242c35 21px 22px, transparent 22px 32px, #242c35 32px 33px, transparent 33px 42px, #242c35 42px 43px, transparent 43px);
  background-size: 53px 53px;
  background-position: 13px 38px;
}
.drawing { position: absolute; left: 0; top: 0; width: 100%; height: 100%; }
.compass { position: absolute; right: -1px; top: 22px; }
.bearings { fill: #f0f0f0; font-family: "Noto Sans CJK SC", sans-serif; font-size: 15px; font-weight: 300; text-anchor: middle; }
.bearings .up { fill: #70726e; font-size: 20px; }

/* layout tabs */
.layouts { position: relative; display: flex; height: 26px; padding-left: 52px; border-top: 2px solid #f0f0f0; border-bottom: 2px solid #c8c8c8; font-size: 14px; line-height: 18px; color: #c8c8c8; }
.layouts a { width: 46px; }
.layouts .model { width: 47px; height: 20px; padding-left: 9px; background: #2a2a2a; clip-path: polygon(0 0, 100% 0, 82% 100%, 20% 100%); color: #f0f0f0; font-weight: bold; }
.edges { position: absolute; left: 47px; top: 0; }

/* command line */
.command { display: flex; padding: 5px 0; background: #343434; }
.grip { width: 22px; background: #3a3a3a; }
.console { flex: 1; display: flex; flex-direction: column; border: 2px solid #d8d8d8; border-width: 2px 0 2px 2px; border-top-color: #8a8a8a; background: #474747; font-family: "DejaVu Sans Mono", "Noto Sans CJK SC", monospace; color: #d8d8d8; }
.history { display: flex; height: 30px; overflow: hidden; border-bottom: 1px solid #5c5c5c; }
.lines { display: flex; flex: 1; flex-direction: column; justify-content: flex-end; padding-left: 3px; font-size: 15px; line-height: 22px; }
.vscroll { width: 20px; background: #f0f0f0; }
.entry { display: flex; height: 20px; padding: 0 20px 0 3px; font-size: 16px; line-height: 20px; }
.entry input { flex: 1; min-width: 0; border: 0; background: none; color: inherit; font: inherit; outline: 0; }
.hscroll { width: 93px; padding: 6px 20px; background: #f0f0f0; }
.hscroll i { display: block; width: 20px; height: 8px; background: #888; }

/* status bar */
.status { display: flex; align-items: center; height: 25px; background: #464646; color: #bcbcbc; }
.coords { width: 393px; font-size: 12px; line-height: 20px; white-space: nowrap; }
.toggles { display: grid; grid-template-columns: repeat(14, 1fr); width: 327px; height: 25px; }
.toggles button, .tail, .system button { display: flex; align-items: center; justify-content: center; }
.toggles svg { width: 18px; height: 18px; }
.toggles .on { background: #323232; }
.scale { display: flex; align-items: center; gap: 3px; width: 51px; padding-left: 3px; font-size: 12px; color: #a8a8a8; }
.tail { width: 24px; }
.tail svg { width: 18px; height: 18px; }
.dim { opacity: 0.5; }
.system { display: flex; align-items: center; margin-left: auto; padding-right: 1px; font-size: 13px; }
.system button { width: 23px; }
.system button svg { width: 15px; height: 15px; }
.system span { margin-left: 2px; }
.resize { align-self: flex-end; margin: 6px 0 0 9px; }

.callouts { position: absolute; left: 0; top: 0; z-index: 5; pointer-events: none; }
```
